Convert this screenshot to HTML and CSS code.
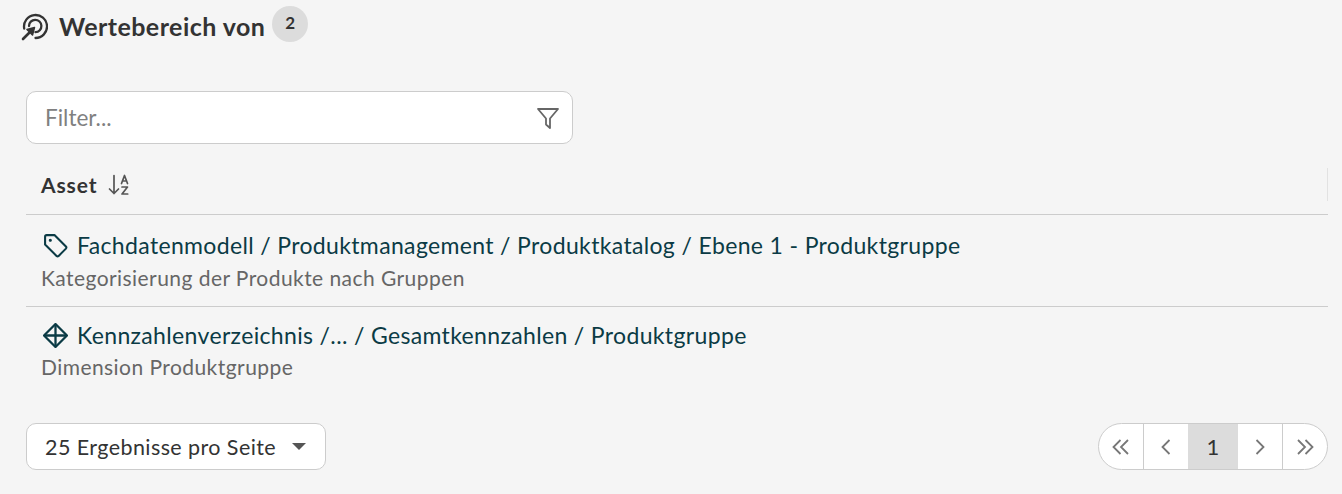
FILE: index.html
```html
<!DOCTYPE html>
<html lang="en">
  <head>
    <meta charset="utf-8" />
    <meta name="viewport" content="width=device-width, initial-scale=1" />
    <title>Wertebereich von</title>
    <link rel="stylesheet" href="styles.css">
  </head>
  <body>
    <div class="page">
      <div class="page-title">
        <svg class="title-icon" viewBox="0 0 28 28" fill="none" stroke="#333" stroke-width="2.3" stroke-linecap="round">
          <path d="M4.200 15.500A11.500 11.500 0 1 1 15.500 25"/>
          <path d="M9 13A6.200 6.200 0 1 1 15.500 19.200"/>
          <path d="M3 26l6-6" stroke-width="2.600"/>
          <path d="M14.500 14.500l-7.500 2 5.500 5.500z" fill="#333" stroke-width="1.500" stroke-linejoin="round"/>
        </svg>
        <h2>Wertebereich von</h2>
        <span class="count-badge">2</span>
      </div>

      <div class="filter-box">
        <span class="placeholder">Filter...</span>
        <svg class="filter-icon" viewBox="0 0 24 24" fill="none" stroke="#666" stroke-width="1.8" stroke-linejoin="round">
          <path d="M2 3h20l-8 9.500V22l-4-3.500v-6z"/>
        </svg>
      </div>

      <div class="table-head">
        <span class="head-label">Asset</span>
        <svg class="sort-icon" viewBox="0 0 22 22" fill="none" stroke="#555" stroke-width="1.700" stroke-linecap="round" stroke-linejoin="round">
          <path d="M6 1.500v18M1.500 15l4.500 4.500 4.500-4.500"/>
          <path d="M13.500 9.500l3-8 3 8M14.500 7h4"/>
          <path d="M14 13h5.500l-5.500 7h5.700"/>
        </svg>
        <span class="head-divider"></span>
      </div>

      <div class="asset-row">
        <div class="asset-name">
          <svg class="asset-icon" viewBox="0 0 24 24" fill="none" stroke="#0b3b45" stroke-width="2" stroke-linejoin="round">
            <path d="M2 3.500A1.500 1.500 0 0 1 3.500 2H11l11 11a1.500 1.500 0 0 1 0 2l-7 7a1.500 1.500 0 0 1-2 0L2 11z"/>
            <circle cx="7" cy="7" r="1" fill="#0b3b45" stroke-width="1"/>
          </svg>
          <span>Fachdatenmodell / Produktmanagement / Produktkatalog / Ebene 1 - Produktgruppe</span>
        </div>
        <div class="asset-desc">Kategorisierung der Produkte nach Gruppen</div>
      </div>

      <div class="asset-row last-row">
        <div class="asset-name">
          <svg class="asset-icon" viewBox="0 0 24 24" fill="none" stroke="#0b3b45" stroke-width="2.200" stroke-linejoin="round">
            <path d="M12 1L23 12 12 23 1 12z"/>
            <path d="M1 12h22M12 1v22"/>
          </svg>
          <span>Kennzahlenverzeichnis /... / Gesamtkennzahlen / Produktgruppe</span>
        </div>
        <div class="asset-desc">Dimension Produktgruppe</div>
      </div>

      <div class="table-foot">
        <div class="page-size">
          <span>25 Ergebnisse pro Seite</span>
          <span class="caret"></span>
        </div>
        <div class="pager">
          <span class="pager-btn"><svg viewBox="0 0 20 20"><path d="M9.500 3l-7 7 7 7M17 3l-7 7 7 7"/></svg></span>
          <span class="pager-btn"><svg viewBox="0 0 20 20"><path d="M13.500 3l-7 7 7 7"/></svg></span>
          <span class="pager-btn current">1</span>
          <span class="pager-btn"><svg viewBox="0 0 20 20"><path d="M6.500 3l7 7-7 7"/></svg></span>
          <span class="pager-btn"><svg viewBox="0 0 20 20"><path d="M3 3l7 7-7 7M10.500 3l7 7-7 7"/></svg></span>
        </div>
      </div>
    </div>
  </body>
</html>
```

FILE: styles.css
```css
body {
  margin: 0;
  background-color: #f5f5f5;
  font-family: "Lato", "Noto Sans", sans-serif;
  color: #333;
}

.page {
  padding: 6px 14px 0 26px;
}

.page-title {
  display: flex;
  align-items: flex-start;
  height: 85px;
  margin-left: -6px;
}

.title-icon {
  width: 28px;
  height: 28px;
  margin-top: 7px;
}

.page-title h2 {
  margin: 5px 0 0 11px;
  font-size: 25px;
  line-height: 31px;
  font-weight: 700;
  letter-spacing: 0.45px;
}

.count-badge {
  width: 36px;
  height: 36px;
  margin-left: 7px;
  border-radius: 50%;
  background-color: #dcdcdc;
  font-size: 17px;
  font-weight: 700;
  line-height: 34px;
  text-align: center;
}

.filter-box {
  display: flex;
  align-items: center;
  justify-content: space-between;
  box-sizing: border-box;
  width: 547px;
  height: 53px;
  padding: 0 12px 0 18px;
  background-color: #fff;
  border: 1px solid #ccc;
  border-radius: 10px;
}

.placeholder {
  font-size: 22.5px;
  color: #808080;
}

.filter-icon {
  width: 24px;
  height: 24px;
}

.table-head {
  display: flex;
  align-items: center;
  box-sizing: border-box;
  height: 71px;
  padding: 11px 0 0 15px;
  border-bottom: 1px solid #ccc;
  font-size: 21px;
  font-weight: 700;
  letter-spacing: 0.9px;
}

.sort-icon {
  width: 22px;
  height: 22px;
  margin-left: 11px;
}

.head-divider {
  width: 1px;
  height: 33px;
  margin-left: auto;
  margin-right: 0;
  background-color: #e2e2e2;
}

.asset-row {
  height: 92px;
  box-sizing: border-box;
  padding: 14px 15px 0;
  border-bottom: 1px solid #ccc;
}

.last-row {
  height: 91px;
  padding-top: 12px;
  border-bottom: none;
}

.asset-name {
  display: flex;
  align-items: center;
  height: 32px;
  font-size: 23px;
  letter-spacing: 0.35px;
  color: #0b3b45;
}

.asset-icon {
  width: 25px;
  height: 25px;
  margin: 0 9px 0 2px;
}

.asset-desc {
  margin-top: 4px;
  font-size: 21px;
  line-height: 26px;
  letter-spacing: 0.44px;
  color: #666;
}

.last-row .asset-desc {
  margin-top: 3px;
}

.table-foot {
  display: flex;
  align-items: center;
  justify-content: space-between;
  margin-top: 25px;
}

.page-size {
  display: flex;
  align-items: center;
  box-sizing: border-box;
  width: 300px;
  height: 47px;
  padding: 0 19px 0 18px;
  justify-content: space-between;
  background-color: #fff;
  border: 1px solid #ccc;
  border-radius: 10px;
  font-size: 21.5px;
  letter-spacing: 0.42px;
}

.caret {
  width: 0;
  height: 0;
  border-left: 7px solid transparent;
  border-right: 7px solid transparent;
  border-top: 7px solid #555;
}

.pager {
  display: flex;
  height: 47px;
  box-sizing: border-box;
  background-color: #fff;
  border: 1px solid #ccc;
  border-radius: 24px;
  overflow: hidden;
}

.pager-btn {
  display: flex;
  align-items: center;
  justify-content: center;
  width: 44px;
  border-left: 1px solid #ccc;
  font-size: 22px;
}

.pager-btn:first-child {
  border-left: none;
}

.pager-btn.current {
  width: 50px;
  background-color: #dcdcdc;
  border-left: none;
}

.pager-btn.current + .pager-btn {
  border-left: none;
}

.pager-btn svg {
  width: 20px;
  height: 20px;
  fill: none;
  stroke: #777;
  stroke-width: 1.8;
}
```
